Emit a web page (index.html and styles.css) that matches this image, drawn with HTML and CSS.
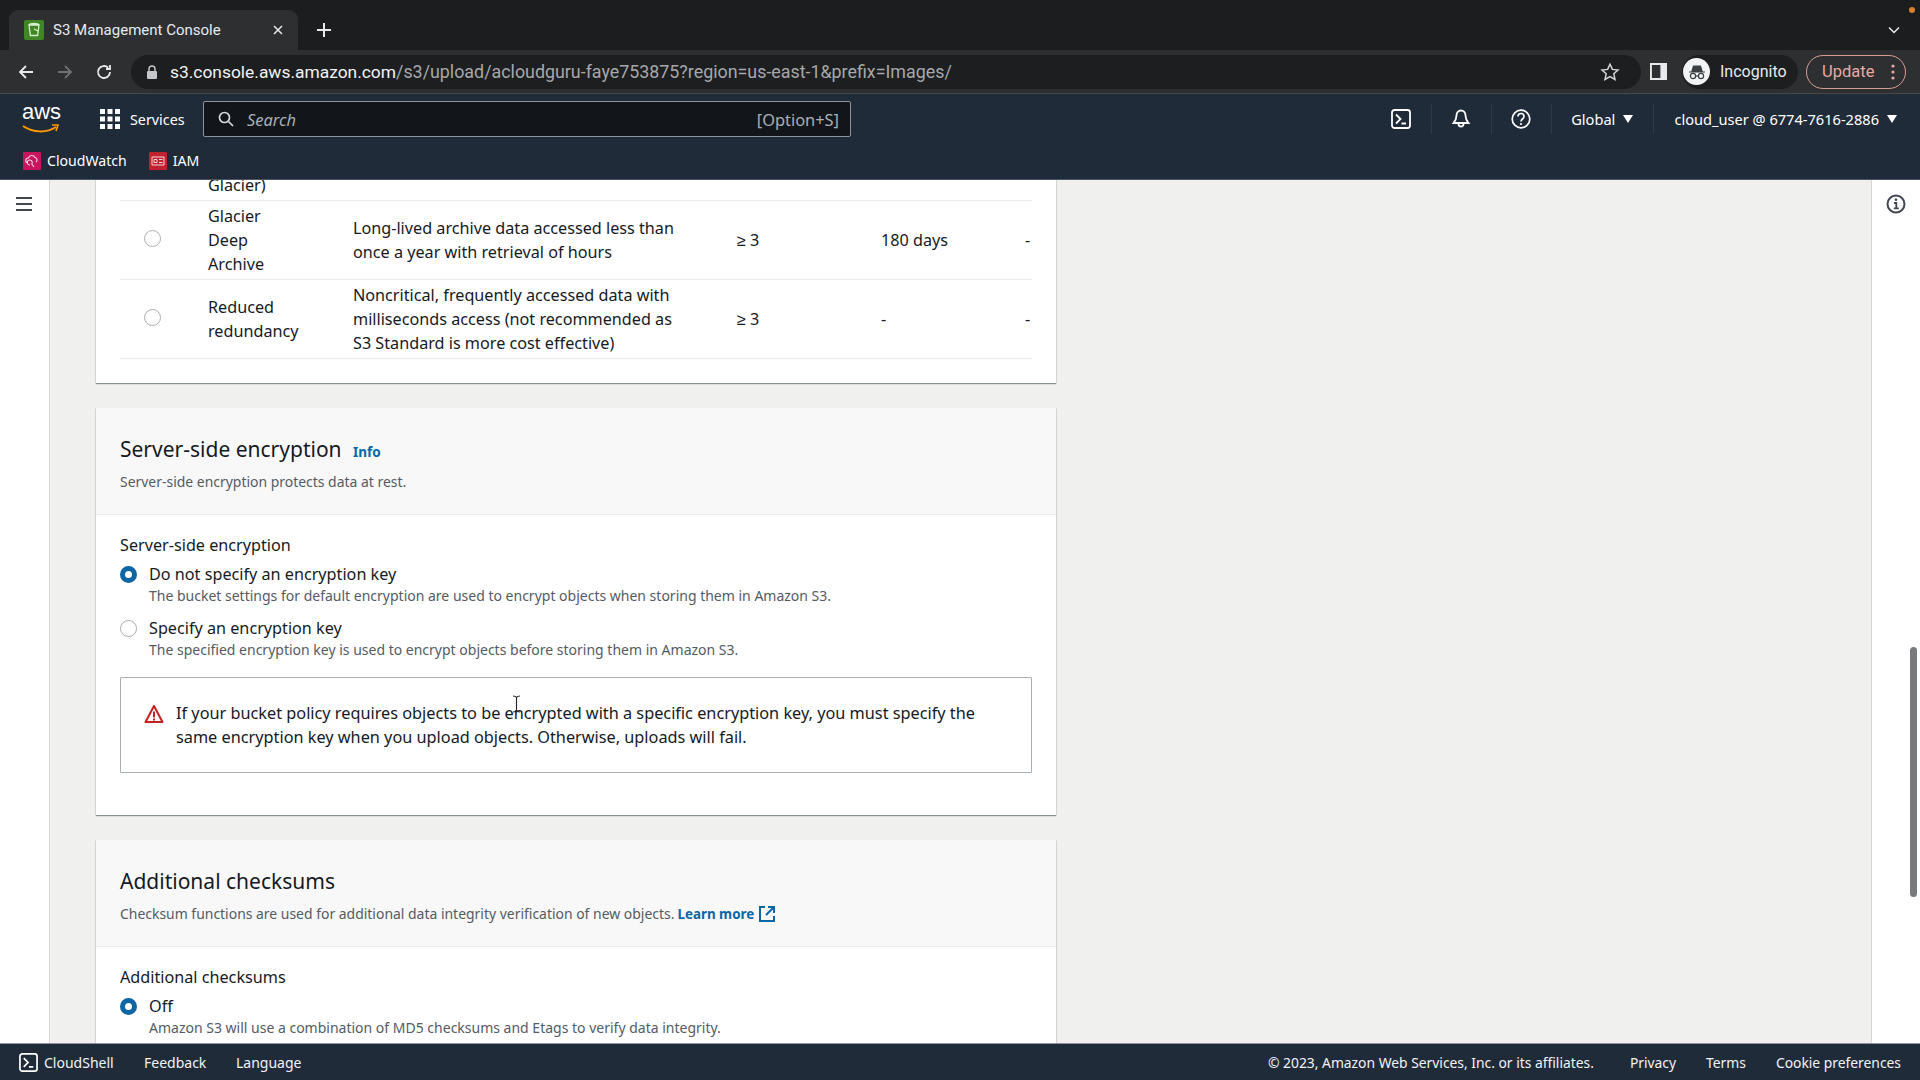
FILE: index.html
```html
<!DOCTYPE html>
<html lang="en">
<head>
	<meta charset="utf-8" />
	<title>S3 Management Console</title>
	<link rel="stylesheet" href="styles.css">
</head>
<body>

<div class="tabstrip">
	<div class="tab">
		<svg class="favicon" viewBox="0 0 20 20"><rect width="20" height="20" rx="2" fill="#3f8624"/><path d="M5 5h10l-1.4 10.5h-7.2zM5 5c1-2 9-2 10 0M10 9l4 2" fill="none" stroke="#d9ecd0" stroke-width="1.3"/></svg>
		<span class="tab-title">S3 Management Console</span>
		<svg class="tab-close" viewBox="0 0 12 12"><path d="M2 2l8 8M10 2l-8 8" stroke="#e8eaed" stroke-width="1.5"/></svg>
	</div>
	<svg class="tab-new" viewBox="0 0 16 16"><path d="M8 1v14M1 8h14" stroke="#e8eaed" stroke-width="2"/></svg>
	<svg class="tab-list" viewBox="0 0 12 8"><path d="M1 1.5l5 5 5-5" fill="none" stroke="#e8eaed" stroke-width="1.5"/></svg>
	<span class="rec-dot"></span>
</div>

<div class="toolbar">
	<svg class="tool-icon" viewBox="0 0 18 18"><path d="M16 9H3M9 3L3 9l6 6" fill="none" stroke="#e8eaed" stroke-width="1.8"/></svg>
	<svg class="tool-icon" viewBox="0 0 18 18"><path d="M2 9h13M9 3l6 6-6 6" fill="none" stroke="#6f7174" stroke-width="1.8"/></svg>
	<svg class="tool-icon" viewBox="0 0 18 18"><path d="M15 9a6 6 0 1 1-1.8-4.3M15 2v4h-4" fill="none" stroke="#e8eaed" stroke-width="1.8"/></svg>
	<div class="urlbar">
		<svg class="lock" viewBox="0 0 12 14"><path d="M3 6V4a3 3 0 0 1 6 0v2" fill="none" stroke="#c4c6c9" stroke-width="1.4"/><rect x="1" y="6" width="10" height="8" rx="1" fill="#c4c6c9"/></svg>
		<span class="url"><span class="url-host">s3.console.aws.amazon.com</span>/s3/upload/acloudguru-faye753875?region=us-east-1&amp;prefix=Images/</span>
		<svg class="star" viewBox="0 0 20 20"><path d="M10 2.2l2.4 5.2 5.6.6-4.2 3.8 1.2 5.6-5-2.9-5 2.9 1.2-5.6L2 8l5.6-.6z" fill="none" stroke="#d5d7da" stroke-width="1.5"/></svg>
	</div>
	<svg class="panel-icon" viewBox="0 0 18 18"><path d="M1 1h16v16H1z" fill="none" stroke="#e8eaed" stroke-width="2"/><path d="M11 1h6v16h-6z" fill="#e8eaed"/></svg>
	<div class="incognito">
		<span class="avatar"><svg viewBox="0 0 20 20"><path d="M5 9l1.5-5h7L15 9zM2 10h16" fill="#3c4043" stroke="#3c4043" stroke-width="1.2"/><circle cx="6" cy="14" r="2.6" fill="none" stroke="#3c4043" stroke-width="1.2"/><circle cx="14" cy="14" r="2.6" fill="none" stroke="#3c4043" stroke-width="1.2"/><path d="M8.6 14h2.8" stroke="#3c4043" stroke-width="1.2"/></svg></span>
		<span>Incognito</span>
	</div>
	<div class="update">
		<span>Update</span>
		<svg class="dots" viewBox="0 0 4 16"><circle cx="2" cy="2" r="1.6" fill="#e8a9a4"/><circle cx="2" cy="8" r="1.6" fill="#e8a9a4"/><circle cx="2" cy="14" r="1.6" fill="#e8a9a4"/></svg>
	</div>
</div>

<header class="awsbar">
	<div class="awsbar-top">
		<div class="logo">
			<span class="logo-text">aws</span>
			<svg class="smile" viewBox="0 0 38 10"><path d="M1 2c10 7 24 7 33 1" fill="none" stroke="#f90" stroke-width="2"/><path d="M30 1l6 0-2 6" fill="none" stroke="#f90" stroke-width="1.6"/></svg>
		</div>
		<svg class="grid-icon" viewBox="0 0 20 20"><g fill="#fff"><rect width="5" height="5"/><rect x="7.5" width="5" height="5"/><rect x="15" width="5" height="5"/><rect y="7.5" width="5" height="5"/><rect x="7.5" y="7.5" width="5" height="5"/><rect x="15" y="7.5" width="5" height="5"/><rect y="15" width="5" height="5"/><rect x="7.5" y="15" width="5" height="5"/><rect x="15" y="15" width="5" height="5"/></g></svg>
		<span class="services">Services</span>
		<div class="search">
			<svg class="search-icon" viewBox="0 0 16 16"><circle cx="6.5" cy="6.5" r="5" fill="none" stroke="#d5dbdb" stroke-width="1.7"/><path d="M10.5 10.5l4.5 4.5" stroke="#d5dbdb" stroke-width="1.7"/></svg>
			<span class="search-text">Search</span>
			<span class="search-key">[Option+S]</span>
		</div>
		<div class="nav-right">
			<svg class="nav-icon" viewBox="0 0 20 20"><rect x="1" y="1" width="18" height="18" rx="2.5" fill="none" stroke="#fff" stroke-width="1.8"/><path d="M5 5.500L9.500 10 5 14.500M10.500 14.500h4.500" fill="none" stroke="#fff" stroke-width="1.8"/></svg>
			<span class="nav-sep"></span>
			<svg class="nav-icon" viewBox="0 0 20 20"><path d="M10 1.500c-3 0-4.500 2.500-4.500 5 0 3.500-1 5-3 7.500h15c-2-2.500-3-4-3-7.500 0-2.500-1.500-5-4.500-5zM7.500 15a2.500 2.500 0 0 0 5 0" fill="none" stroke="#fff" stroke-width="1.8"/></svg>
			<span class="nav-sep"></span>
			<svg class="nav-icon" viewBox="0 0 20 20"><circle cx="10" cy="10" r="8.800" fill="none" stroke="#fff" stroke-width="1.7"/><path d="M7 7.500c0-4 6-4 6 0 0 2.500-3 2.500-3 5" fill="none" stroke="#fff" stroke-width="1.7"/><circle cx="10" cy="15" r="1.100" fill="#fff"/></svg>
			<span class="nav-sep"></span>
			<span class="nav-menu">Global<i class="caret"></i></span>
			<span class="nav-sep"></span>
			<span class="nav-menu nav-user">cloud_user @ 6774-7616-2886<i class="caret"></i></span>
		</div>
	</div>
	<div class="bookmarks">
		<span class="bookmark">
			<svg class="bm-icon" viewBox="0 0 18 18"><rect width="18" height="18" rx="1" fill="#c7155f"/><path d="M5 11a2.500 2.500 0 0 1 .5-5 3.500 3.500 0 0 1 6.500-.5 2.500 2.500 0 0 1 1 4.500M7 13a2.500 2.500 0 1 1 1.800-1l2.200 3" fill="none" stroke="#f5d5e3" stroke-width="1.100"/></svg>
			CloudWatch
		</span>
		<span class="bookmark bookmark-iam">
			<svg class="bm-icon" viewBox="0 0 18 18"><rect width="18" height="18" rx="1" fill="#c3212f"/><path d="M3 5h12v8H3zM5 7.500h3v3H5zM10 7.500h3.500M10 10.500h3.500" fill="none" stroke="#f6d3d6" stroke-width="1"/></svg>
			IAM
		</span>
	</div>
</header>

<div class="layout">
	<aside class="leftnav">
		<svg class="menu-icon" viewBox="0 0 18 16"><path d="M1 2h16M1 8h16M1 14h16" stroke="#414750" stroke-width="2"/></svg>
	</aside>

	<main class="content">
		<section class="card card-table">
			<div class="row row-cut">
				<div></div>
				<div>Glacier)</div>
			</div>
			<div class="row">
				<div><span class="radio"></span></div>
				<div>Glacier<br>Deep<br>Archive</div>
				<div>Long-lived archive data accessed less than<br>once a year with retrieval of hours</div>
				<div>≥ 3</div>
				<div>180 days</div>
				<div>-</div>
			</div>
			<div class="row">
				<div><span class="radio"></span></div>
				<div>Reduced<br>redundancy</div>
				<div>Noncritical, frequently accessed data with<br>milliseconds access (not recommended as<br>S3 Standard is more cost effective)</div>
				<div>≥ 3</div>
				<div>-</div>
				<div>-</div>
			</div>
		</section>

		<section class="card">
			<div class="card-head">
				<h2>Server-side encryption <a class="info">Info</a></h2>
				<p class="card-desc">Server-side encryption protects data at rest.</p>
			</div>
			<div class="card-body">
				<div class="field-label">Server-side encryption</div>
				<div class="option">
					<span class="radio radio-on"></span>
					<div>
						<div class="option-title">Do not specify an encryption key</div>
						<div class="option-desc">The bucket settings for default encryption are used to encrypt objects when storing them in Amazon S3.</div>
					</div>
				</div>
				<div class="option">
					<span class="radio"></span>
					<div>
						<div class="option-title">Specify an encryption key</div>
						<div class="option-desc">The specified encryption key is used to encrypt objects before storing them in Amazon S3.</div>
					</div>
				</div>
				<div class="alert">
					<svg class="alert-icon" viewBox="0 0 20 20"><path d="M10 2L1.500 18h17z" fill="none" stroke="#c5221f" stroke-width="2" stroke-linejoin="round"/><path d="M10 7.500v6M10 14.500v2" stroke="#c5221f" stroke-width="2"/></svg>
					<p>If your bucket policy requires objects to be encrypted with a specific encryption key, you must specify the<br>same encryption key when you upload objects. Otherwise, uploads will fail.</p>
				</div>
			</div>
		</section>

		<section class="card">
			<div class="card-head">
				<h2>Additional checksums</h2>
				<p class="card-desc">Checksum functions are used for additional data integrity verification of new objects. <a class="learn">Learn more</a>
					<svg class="ext-icon" viewBox="0 0 18 18"><path d="M7 2H2v14h14v-5M10 2h6v6M16 2L8 10" fill="none" stroke="#0b66a5" stroke-width="2"/></svg>
				</p>
			</div>
			<div class="card-body">
				<div class="field-label">Additional checksums</div>
				<div class="option">
					<span class="radio radio-on"></span>
					<div>
						<div class="option-title">Off</div>
						<div class="option-desc">Amazon S3 will use a combination of MD5 checksums and Etags to verify data integrity.</div>
					</div>
				</div>
			</div>
		</section>

		<svg class="ibeam" viewBox="0 0 9 18"><path d="M1 1c2 0 3 .5 3.500 1.500C5 1.500 6 1 8 1M4.500 2.500v13M1 17c2 0 3-.5 3.500-1.500.5 1 1.500 1.500 3.500 1.500" fill="none" stroke="#222" stroke-width="1.100"/></svg>
	</main>

	<aside class="rightpanel">
		<svg class="info-icon" viewBox="0 0 20 20"><circle cx="10" cy="10" r="8.500" fill="none" stroke="#414750" stroke-width="2"/><path d="M8 9h2.300v5M7.800 14.300h5" fill="none" stroke="#414750" stroke-width="1.800"/><circle cx="10" cy="5.800" r="1.300" fill="#414750"/></svg>
		<span class="scroll-thumb"></span>
	</aside>
</div>

<footer class="footer">
	<svg class="footer-icon" viewBox="0 0 20 20"><rect x="1" y="1" width="18" height="18" rx="2.500" fill="none" stroke="#fff" stroke-width="1.800"/><path d="M5 5.500L9.500 10 5 14.500M10.500 14.500h4.500" fill="none" stroke="#fff" stroke-width="1.800"/></svg>
	<span class="f-shell">CloudShell</span>
	<span class="f-feedback">Feedback</span>
	<span>Language</span>
	<div class="footer-right">
		<span class="f-copy">© 2023, Amazon Web Services, Inc. or its affiliates.</span>
		<span>Privacy</span>
		<span>Terms</span>
		<span>Cookie preferences</span>
	</div>
</footer>

</body>
</html>
```

FILE: styles.css
```css
* {
	box-sizing: border-box;
}
html,
body {
	margin: 0;
	height: 100%;
	overflow: hidden;
}
body {
	display: grid;
	grid-template-rows: 50px 44px 86px 1fr 37px;
	height: 1080px;
	font-family: "Noto Sans", sans-serif;
	font-size: 16.2px;
	color: #16191f;
	background: #f0f1ef;
}
svg {
	flex: none;
	display: block;
}

/* browser chrome */
.tabstrip {
	position: relative;
	display: flex;
	align-items: flex-end;
	background: #1c1d1f;
}
.tab {
	display: flex;
	align-items: center;
	width: 289px;
	height: 40px;
	margin-left: 9px;
	padding: 0 14px 0 15px;
	background: #2d2f31;
	border-radius: 9px 9px 0 0;
	color: #e8eaed;
	font-family: Roboto, sans-serif;
	font-size: 15px;
}
.favicon {
	width: 20px;
	height: 20px;
}
.tab-title {
	margin-left: 9px;
	flex: 1;
}
.tab-close {
	width: 12px;
	height: 12px;
}
.tab-new {
	width: 16px;
	height: 16px;
	margin: 0 0 12px 18px;
}
.tab-list {
	width: 12px;
	height: 8px;
	margin: 0 20px 16px auto;
}
.rec-dot {
	position: absolute;
	top: 7px;
	right: 5px;
	width: 6px;
	height: 6px;
	border-radius: 50%;
	background: #d9822b;
}
.toolbar {
	display: flex;
	align-items: center;
	padding: 0 9px 0 17px;
	background: #2d2f31;
	border-bottom: 1px solid #46484a;
}
.tool-icon {
	width: 18px;
	height: 18px;
	margin-right: 21px;
}
.urlbar {
	display: flex;
	align-items: center;
	width: 1510px;
	height: 34px;
	margin-left: -3px;
	padding: 0 21px 0 15px;
	background: #1d1e20;
	border-radius: 17px;
	color: #a6a8ab;
	font-family: Roboto, sans-serif;
	font-size: 17.85px;
}
.lock {
	width: 12px;
	height: 14px;
}
.url {
	margin-left: 12px;
	flex: 1;
}
.url-host {
	color: #f1f3f4;
	font-size: 17.4px;
}
.star {
	width: 20px;
	height: 20px;
}
.panel-icon {
	width: 17px;
	height: 17px;
	margin-left: 9px;
}
.incognito {
	display: flex;
	align-items: center;
	gap: 10px;
	width: 116px;
	height: 34px;
	margin-left: 15px;
	padding-left: 1px;
	background: #1d1e20;
	border-radius: 17px;
	color: #e8eaed;
	font-family: Roboto, sans-serif;
	font-size: 16px;
}
.avatar {
	display: flex;
	align-items: center;
	justify-content: center;
	width: 27px;
	height: 27px;
	border-radius: 50%;
	background: #f1f3f4;
}
.avatar svg {
	width: 20px;
	height: 20px;
}
.update {
	display: flex;
	align-items: center;
	justify-content: space-between;
	width: 100px;
	height: 34px;
	margin-left: 8px;
	padding: 0 10px 0 15px;
	border: 1px solid #d79b96;
	border-radius: 17px;
	color: #e8a9a4;
	font-family: Roboto, sans-serif;
	font-size: 16.5px;
}
.dots {
	width: 4px;
	height: 16px;
}

/* aws header */
.awsbar {
	background: #202b3a;
	color: #fff;
	font-size: 14.5px;
	border-bottom: 1px solid #4a5462;
}
.awsbar-top {
	display: flex;
	align-items: center;
	height: 50px;
	padding: 0 23px 0 22px;
}
.logo {
	width: 78px;
	height: 34px;
}
.logo-text {
	display: block;
	height: 22px;
	font-family: "Liberation Sans", sans-serif;
	font-size: 22px;
	line-height: 20px;
}
.smile {
	width: 38px;
	height: 10px;
}
.grid-icon {
	width: 20px;
	height: 20px;
}
.services {
	margin-left: 10px;
	width: 73px;
	font-size: 14.3px;
}
.search {
	display: flex;
	align-items: center;
	width: 648px;
	height: 36px;
	padding: 0 11px 0 14px;
	background: #12161b;
	border: 1px solid #8d939b;
	border-radius: 2px;
	color: #a9afb5;
	font-size: 16.4px;
}
.search-icon {
	width: 16px;
	height: 16px;
}
.search-text {
	margin-left: 13px;
	flex: 1;
	font-style: italic;
}
.nav-right {
	display: flex;
	align-items: center;
	margin-left: auto;
	font-size: 14.6px;
}
.nav-icon {
	width: 20px;
	height: 20px;
}
.nav-sep {
	width: 1px;
	height: 30px;
	margin: 0 19.5px;
	background: #2f3a49;
}
.nav-menu {
	display: flex;
	align-items: center;
	white-space: nowrap;
}
.nav-user {
	margin-left: 1px;
}
.caret {
	width: 0;
	height: 0;
	margin-left: 8px;
	border-left: 5px solid transparent;
	border-right: 5px solid transparent;
	border-top: 8px solid #fff;
}
.bookmarks {
	display: flex;
	align-items: center;
	height: 33px;
	padding-left: 23px;
	font-size: 14.1px;
}
.bookmark {
	display: flex;
	align-items: center;
	gap: 6px;
}
.bookmark-iam {
	margin-left: 22px;
}
.bm-icon {
	width: 18px;
	height: 18px;
}

/* page layout */
.layout {
	display: flex;
	min-height: 0;
}
.leftnav {
	width: 50px;
	padding: 16px 0 0 15px;
	background: #fff;
	border-right: 1px solid #d5d7d6;
}
.menu-icon {
	width: 18px;
	height: 16px;
}
.content {
	position: relative;
	flex: 1;
	padding-left: 46px;
	overflow: hidden;
}
.rightpanel {
	position: relative;
	width: 49px;
	padding: 14px 0 0 14px;
	background: #fff;
	border-left: 1px solid #d5d7d6;
}
.info-icon {
	width: 20px;
	height: 20px;
}
.scroll-thumb {
	position: absolute;
	top: 467px;
	right: 3px;
	width: 7px;
	height: 250px;
	border-radius: 4px;
	background: #77797b;
}

/* cards */
.card {
	width: 960px;
	margin-bottom: 25px;
	background: #fff;
	box-shadow: 0 1px 1px 0 rgba(0, 28, 36, 0.45), 1px 0 0 0 rgba(0, 28, 36, 0.06), -1px 0 0 0 rgba(0, 28, 36, 0.06);
}
.card-table {
	margin-top: -7px;
	padding: 0 24px 24px;
}
.row {
	display: grid;
	grid-template-columns: 88px 145px 384px 144px 144px 1fr;
	align-items: center;
	padding: 3px 0;
	border-bottom: 1px solid #e9ebea;
	line-height: 24px;
}
.row-cut {
	padding-top: 0;
}
.row > div:first-child {
	padding-left: 24px;
}
.row .radio {
	margin-top: -3px;
}
.card-head {
	padding: 27px 24px 21px;
	background: #f7f8f7;
	border-bottom: 1px solid #e9ebea;
}
h2 {
	height: 28px;
	margin: 0;
	font-size: 21px;
	font-weight: 400;
	line-height: 28px;
}
.info {
	margin-left: 6px;
	color: #0b66a5;
	font-size: 13.5px;
	font-weight: 700;
}
.card-desc {
	display: flex;
	align-items: center;
	gap: 3px;
	margin: 8px 0 0;
	color: #545b64;
	font-size: 13.95px;
	line-height: 22px;
}
.learn {
	color: #0b66a5;
	font-size: 13.4px;
	font-weight: 700;
}
.ext-icon {
	width: 18px;
	height: 18px;
	margin-left: 1px;
}
.card-body {
	padding: 18px 24px 42px;
}
.field-label {
	line-height: 24px;
}
.option {
	display: flex;
	gap: 12px;
	margin-top: 5px;
	margin-bottom: 10px;
}
.option .radio {
	margin-top: 4px;
}
.option-title {
	line-height: 24px;
}
.option-desc {
	color: #545b64;
	font-size: 14px;
	line-height: 20px;
}
.option + .option {
	margin-top: 0;
}
.radio {
	display: block;
	width: 17px;
	height: 17px;
	border: 1.5px solid #a9aeb3;
	border-radius: 50%;
	background: #fff;
}
.radio-on {
	border: 5px solid #0b66a5;
}
.alert {
	display: flex;
	gap: 12px;
	height: 96px;
	margin-top: 17px;
	padding: 23px 10px 0 23px;
	border: 1px solid #a9aeb3;
	border-radius: 1px;
}
.alert-icon {
	width: 20px;
	height: 20px;
	margin-top: 3px;
}
.alert p {
	margin: 0;
	font-size: 16.28px;
	line-height: 24px;
}
.ibeam {
	position: absolute;
	left: 462px;
	top: 515px;
	width: 9px;
	height: 18px;
}

/* footer */
.footer {
	display: flex;
	align-items: center;
	padding: 0 19px 0 19px;
	background: #202b3a;
	color: #f2f3f3;
	font-size: 14px;
	border-top: 1px solid #8d939b;
}
.footer-icon {
	width: 19px;
	height: 19px;
}
.f-shell {
	margin-left: 6px;
	width: 100px;
}
.f-feedback {
	width: 92px;
}
.footer-right {
	display: flex;
	gap: 30px;
	margin-left: auto;
	font-size: 13.85px;
}
.f-copy {
	margin-right: 6px;
}
```
